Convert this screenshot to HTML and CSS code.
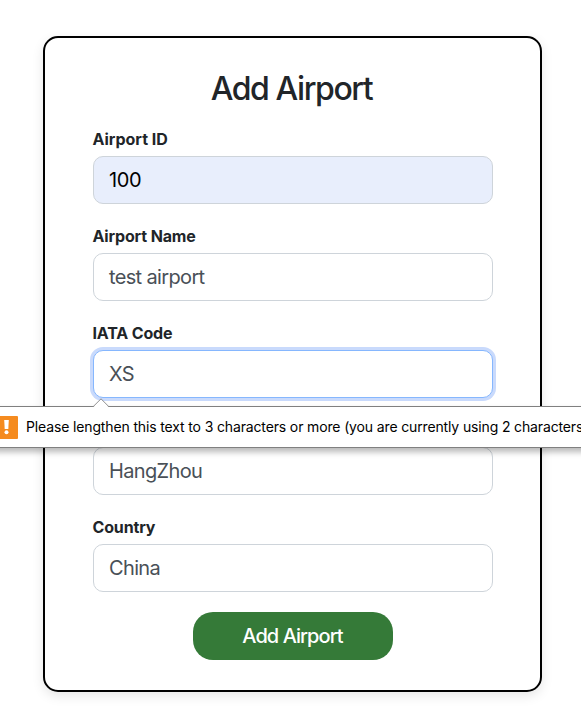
FILE: index.html
```html
<!DOCTYPE html>
<html lang="en">
<head>
<meta charset="utf-8">
<title>Add Airport</title>
<link rel="stylesheet" href="styles.css">
</head>
<body>
<form class="card">
  <h2 class="title">Add Airport</h2>
  <div class="field">
    <label class="label wide">Airport ID</label>
    <div class="control autofilled">100</div>
  </div>
  <div class="field">
    <label class="label">Airport Name</label>
    <div class="control">test airport</div>
  </div>
  <div class="field">
    <label class="label">IATA Code</label>
    <div class="control focused">XS</div>
  </div>
  <div class="field">
    <label class="label"></label>
    <div class="control">HangZhou</div>
  </div>
  <div class="field">
    <label class="label">Country</label>
    <div class="control">China</div>
  </div>
  <button class="submit" type="button">Add Airport</button>
</form>
<div class="bubble" role="alert">
  <svg class="arrow" width="18" height="10" viewBox="0 0 18 10"><path d="M1 9.5 9 1.2 17 9.5V10H1Z" fill="#fff"/><path d="M1 8.8 9 .8 17 8.8" fill="none" stroke="#909090"/></svg>
  <svg class="warning" width="22" height="23" viewBox="0 0 22 23"><rect width="22" height="23" rx="1" fill="#f58b1f"/><path d="M8.2 4h4.6l-.5 9H8.7z" fill="#fff"/><circle cx="10.5" cy="16.2" r="2" fill="#fff"/></svg>
  <span class="message">Please lengthen this text to 3 characters or more (you are currently using 2 characters).</span>
</div>
</body>
</html>
```
FILE: styles.css
```css
* { box-sizing: border-box; }
body {
  margin: 0;
  padding: 36px 0 0 43px;
  height: 719px;
  position: relative;
  overflow: hidden;
  background: #fff;
  color: #212529;
  font-family: Inter, "Liberation Sans", sans-serif;
}
.card {
  width: 499px;
  height: 656px;
  padding: 30px 47px 30px 48px;
  border: 2px solid #000;
  border-radius: 15px;
  box-shadow: 0 4px 12px rgba(0, 0, 0, .1);
}
.title {
  margin: 0 0 19px;
  padding-right: 3px;
  height: 40px;
  font-size: 32px;
  line-height: 41px;
  font-weight: 500;
  text-align: center;
  letter-spacing: -1.4px;
}
.field { margin-bottom: 20px; }
.label {
  display: block;
  height: 24px;
  margin: 0 0 5px -.5px;
  font-size: 16px;
  line-height: 24px;
  font-weight: 700;
  letter-spacing: -.15px;
}
.wide { letter-spacing: 0; }
.control {
  display: flex;
  align-items: center;
  height: 48px;
  width: 400px;
  padding: 0 15px;
  border: 1px solid #ced4da;
  border-radius: 10px;
  background: #fff;
  color: #495057;
  font-size: 20px;
  letter-spacing: -.65px;
}
.autofilled { background: #e8eefc; color: #000; letter-spacing: -.4px; }
.focused {
  border-color: #86b7fe;
  box-shadow: 0 0 0 3px #c9dafc;
}
.submit {
  display: block;
  width: 200px;
  height: 48px;
  margin: 0 auto;
  padding: 0 1px 0 0;
  border: 0;
  border-radius: 20px;
  background: #357a38;
  color: #fff;
  font: 500 20px/48px Inter, "Liberation Sans", sans-serif;
  letter-spacing: -.95px;
}
.bubble {
  position: absolute;
  top: 406px;
  left: -10px;
  width: 620px;
  height: 42px;
  display: flex;
  align-items: center;
  padding-left: 5px;
  border: 1px solid #808080;
  background: #fff;
  box-shadow: 0 4px 6px rgba(0, 0, 0, .28);
  color: #000;
  font-size: 14px;
  white-space: nowrap;
}
.arrow { position: absolute; left: 101px; top: -9px; }
.warning { margin-right: 8px; flex: none; }
.message { letter-spacing: -.14px; margin-top: -2px; }
```
